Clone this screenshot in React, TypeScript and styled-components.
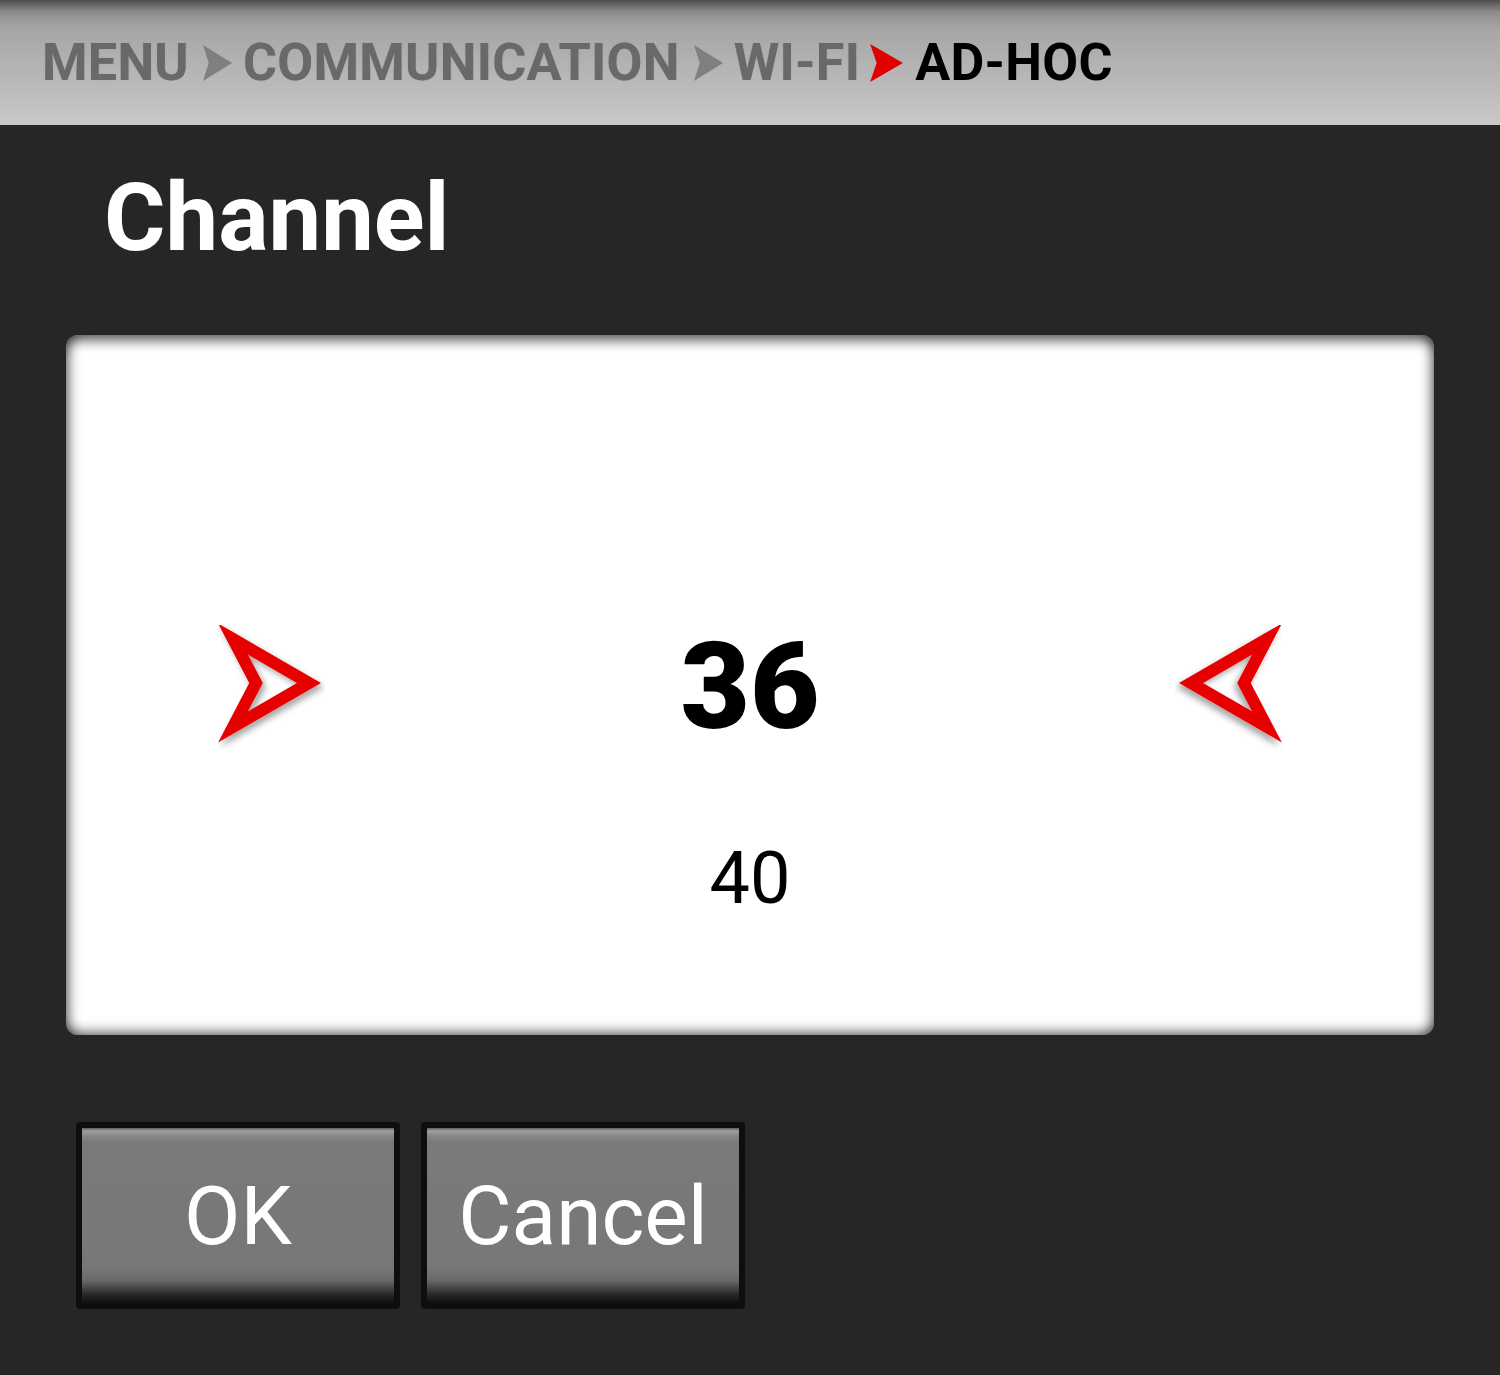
import styled, { createGlobalStyle } from "styled-components";

const GlobalStyle = createGlobalStyle`
  html, body {
    margin: 0;
    padding: 0;
    background: #262626;
    font-family: Roboto, "Liberation Sans", sans-serif;
  }
`;

const crumbs = ["MENU", "COMMUNICATION", "WI-FI"];

function CrumbArrow({ active }: { active?: boolean }) {
  return (
    <CrumbArrowSvg viewBox="0 0 32 38" preserveAspectRatio="none" $active={active}>
      <path d="M1 1 L31 19 L1 37 L7 19 Z" />
    </CrumbArrowSvg>
  );
}

function BigArrow({ flip }: { flip?: boolean }) {
  const id = flip ? "shR" : "shL";
  return (
    <BigArrowSvg viewBox="0 0 110 125" $flip={flip}>
      <defs>
        <filter id={id} x="-20%" y="-20%" width="150%" height="150%">
          <feDropShadow dx="3" dy="4" stdDeviation="3" floodColor="#000" floodOpacity="0.35" />
        </filter>
      </defs>
      <path
        d="M18 14 L94 58 L18 102 L41 58 Z"
        fill="none"
        stroke="#e60000"
        strokeWidth="12"
        strokeLinejoin="miter"
        strokeMiterlimit="4.5"
        filter={`url(#${id})`}
      />
    </BigArrowSvg>
  );
}

export default function App() {
  return (
    <Page>
      <GlobalStyle />
      <Header>
        {crumbs.map((c) => (
          <CrumbGroup key={c}>
            <Crumb>{c}</Crumb>
            <CrumbArrow active={c === "WI-FI"} />
          </CrumbGroup>
        ))}
        <Crumb $current>AD-HOC</Crumb>
      </Header>
      <Title>Channel</Title>
      <Card>
        <BigArrow />
        <ValueColumn>
          <span />
          <Current>36</Current>
          <Next>40</Next>
        </ValueColumn>
        <BigArrow flip />
      </Card>
      <ButtonRow>
        <Button>OK</Button>
        <Button>Cancel</Button>
      </ButtonRow>
    </Page>
  );
}

const Page = styled.div`
  width: 1500px;
  height: 1375px;
  background: #262626;
  overflow: hidden;
`;

const Header = styled.div`
  height: 125px;
  display: flex;
  align-items: center;
  padding-left: 42px;
  box-sizing: border-box;
  background: linear-gradient(
    to bottom,
    #4e4e4e 0px,
    #8c8c8c 12px,
    #a6a6a6 28px,
    #b8b8b8 80px,
    #c9c9c9 125px
  );
`;

const CrumbGroup = styled.div`
  display: flex;
  align-items: center;
`;

const Crumb = styled.span<{ $current?: boolean }>`
  font-size: 52px;
  font-weight: 700;
  letter-spacing: 0.3px;
  line-height: 1;
  color: ${(p) => (p.$current ? "#000" : "#696969")};
  text-shadow: ${(p) => (p.$current ? "none" : "0 0 1px #8a8a8a")};
`;

const CrumbArrowSvg = styled.svg<{ $active?: boolean }>`
  width: ${(p) => (p.$active ? "35px" : "31px")};
  height: ${(p) => (p.$active ? "40px" : "38px")};
  margin: ${(p) => (p.$active ? "0 11px 0 9px" : "0 10px 0 13px")};
  fill: ${(p) => (p.$active ? "#e00000" : "#7f7f7f")};
`;

const Title = styled.h1`
  margin: 46px 0 0 104px;
  font-size: 94px;
  font-weight: 700;
  line-height: 1;
  color: #fff;
`;

const Card = styled.div`
  margin: 70px 0 0 66px;
  width: 1368px;
  height: 700px;
  box-sizing: border-box;
  background: #fff;
  border-radius: 12px;
  box-shadow: inset 0 12px 12px -6px rgba(0, 0, 0, 0.6),
    inset 0 -10px 12px -6px rgba(0, 0, 0, 0.5),
    inset 12px 0 12px -8px rgba(0, 0, 0, 0.45),
    inset -12px 0 12px -8px rgba(0, 0, 0, 0.45);
  display: grid;
  grid-template-columns: 110px 1fr 110px;
  align-items: center;
  padding: 0 149px 0 149px;
`;

const BigArrowSvg = styled.svg<{ $flip?: boolean }>`
  width: 110px;
  height: 125px;
  margin-top: 4px;
  transform: ${(p) => (p.$flip ? "scaleX(-1)" : "none")};
`;

const ValueColumn = styled.div`
  height: 100%;
  display: grid;
  grid-template-rows: 1fr auto 1fr;
  justify-items: center;
`;

const Current = styled.div`
  font-size: 120px;
  font-weight: 900;
  line-height: 1;
  color: #000;
  margin-top: 4px;
`;

const Next = styled.div`
  align-self: start;
  font-size: 72px;
  font-weight: 400;
  line-height: 1;
  color: #000;
  margin-top: 96px;
`;

const ButtonRow = styled.div`
  display: flex;
  gap: 21px;
  margin: 87px 0 0 76px;
`;

const Button = styled.button`
  width: 324px;
  height: 187px;
  box-sizing: border-box;
  border: 6px solid #0e0e0e;
  border-radius: 4px;
  padding: 0;
  background: linear-gradient(
    to bottom,
    #5e5e5e 0px,
    #a0a0a0 3px,
    #8a8a8a 7px,
    #7a7a7a 14px,
    #777 140px,
    #6a6a6a 152px,
    #2a2a2a 166px,
    #101010 175px
  );
  color: #fff;
  font-family: Roboto, "Liberation Sans", sans-serif;
  font-size: 82px;
  font-weight: 400;
  line-height: 1;
  display: flex;
  align-items: center;
  justify-content: center;
`;
